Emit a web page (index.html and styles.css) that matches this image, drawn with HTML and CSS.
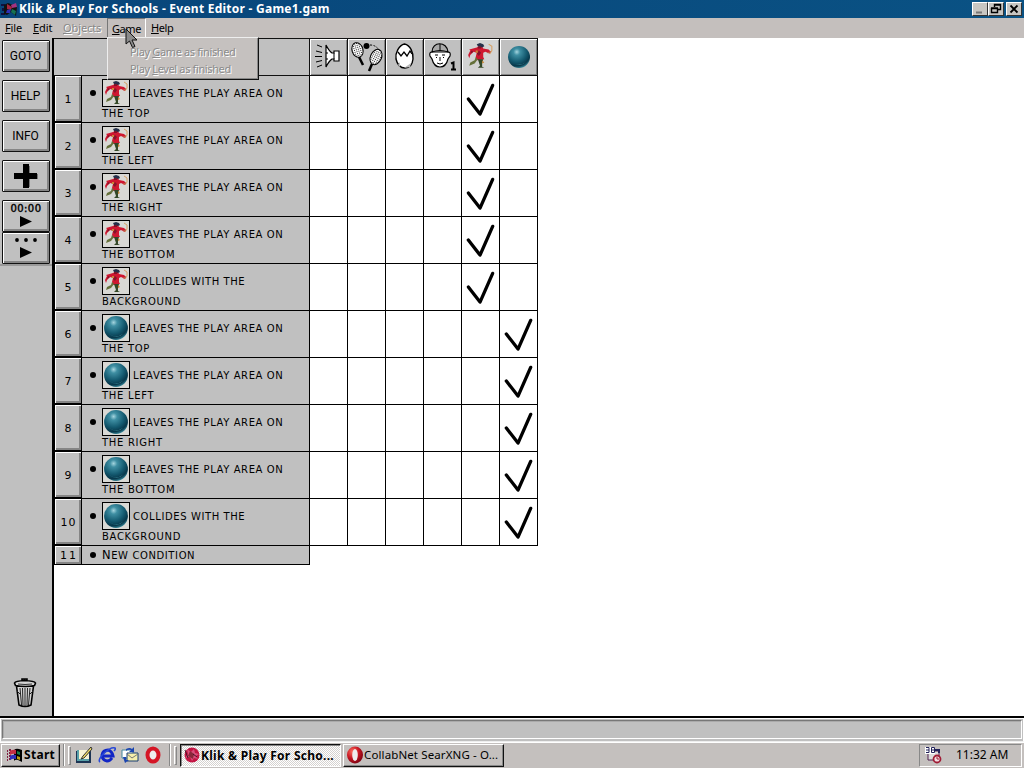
FILE: index.html
```html
<!DOCTYPE html>
<html lang="en">
<head>
<meta charset="utf-8">
<title>Klik &amp; Play For Schools - Event Editor - Game1.gam</title>
<link rel="stylesheet" href="styles.css">
</head>
<body>
<svg class="defs" aria-hidden="true">
<defs>
<radialGradient id="ballg" cx=".4" cy=".27" r=".75"><stop offset="0" stop-color="#a5d5df"/><stop offset=".2" stop-color="#3f8fa3"/><stop offset=".6" stop-color="#145a70"/><stop offset=".85" stop-color="#08384b"/><stop offset="1" stop-color="#35889a"/></radialGradient>
<radialGradient id="redg" cx=".35" cy=".3" r=".8"><stop offset="0" stop-color="#ff7060"/><stop offset=".5" stop-color="#c51522"/><stop offset="1" stop-color="#700010"/></radialGradient>
<pattern id="mesh" width="2" height="2" patternUnits="userSpaceOnUse"><rect width="2" height="2" fill="#fff"/><path d="M0 0h1v1H0z" fill="#222"/></pattern>
<symbol id="ball" viewBox="0 0 24 24"><circle cx="12" cy="12" r="11" fill="url(#ballg)"/><path d="M5 17q7 5 14 0q-6 6-14 0" fill="#55b0bc" opacity=".6"/></symbol>
<symbol id="man" viewBox="0 0 26 26"><path d="M3 7l7-2 2-1h3l1 2 5 1 2 2-1 2-4-2-2 1v4l1 2-7 1-1-3 1-4-3-1-3 3-1 3-1-3 2-4z" fill="#cf1730"/><path d="M10 2l3-1 3 1 1 2-2 1-4-1z" fill="#26304a"/><path d="M11 4h3v2h-3z" fill="#7d1528"/><path d="M12 8l2 2-2 3-2-2zM5 8l2 1-3 2z" fill="#81162a"/><path d="M9 14l-1 3-4 2-1 3 5-2 3-4z" fill="#65713a"/><path d="M11 16h5l-1 4v3l2 1h-6l2-2-1-3z" fill="#344827"/><path d="M15 17l2 2-2 1zM9 8h2v2H9z" fill="#c98735"/><path d="M22 11l2-3V4l-3-2" fill="none" stroke="#d6a064"/><path d="M20 10l3-1" stroke="#be5c41"/></symbol>
<symbol id="check" viewBox="0 0 38 46"><path d="M6.500 23L18.500 38.500L31.500 9" fill="none" stroke="#000" stroke-width="3.400" stroke-linecap="round" stroke-linejoin="round"/></symbol>
<symbol id="win" viewBox="0 0 18 16"><path d="M1 4h1M3 3h2M1 7h1M3 6h2M1 10h1M3 9h2M1 13h1M3 12h2" stroke="#802040" stroke-width="2"/><path d="M8 3q2-2 5-1l3 1v12l-4-2q-3-1-4 1z" fill="#000"/><path d="M4 4q3-2 6-1v4q-3-1-6 1z" fill="#c52e45"/><path d="M11 4l3 1v3l-3-1z" fill="#147947"/><path d="M4 9q3-2 6-1v4q-3-1-6 1z" fill="#3030bd"/><path d="M11 9l3 1v3l-3-1z" fill="#b99a17"/></symbol>
<symbol id="opera" viewBox="0 0 18 18"><ellipse cx="9" cy="9" rx="8" ry="8.500" fill="url(#redg)"/><ellipse cx="9" cy="9" rx="2.800" ry="6" fill="#eee"/></symbol>
</defs>
</svg>
<div class="screen">
  <header class="titlebar">
    <svg class="appicon" viewBox="0 0 18 16"><path d="M0 3h4v2H0zM1 7h4v3H1zM0 12h4v2H0z" fill="#101040"/><path d="M3 4l4-2 5 2 4 2-1 9-5-4-4 3-3-1z" fill="#111"/><path d="M6 3l5 3-1 3-4-1z" fill="#a42740"/><path d="M10 4l5-2 1 4-5 1z" fill="#a43280"/><path d="M6 9l4-1-1 4H5z" fill="#3030b5"/><path d="M11 8l4 2-1 4-4-3z" fill="#167352"/></svg>
    <h1 class="title">Klik &amp; Play For Schools - Event Editor - Game1.gam</h1>
    <div class="winbtns">
      <span class="wb"><svg viewBox="0 0 14 12"><path d="M3 9.500h6" stroke="#777" stroke-width="2"/></svg></span><span class="wb"><svg viewBox="0 0 14 12"><path d="M5.500 4V1.500h6v5H9M5 2h7M2.500 5.500h6v4h-6zM2 5h7" fill="none" stroke="#000" stroke-width="1.400"/></svg></span><span class="wb gap"><svg viewBox="0 0 14 12"><path d="M3.500 2.500l7 7M10.500 2.500l-7 7" stroke="#000" stroke-width="1.800"/></svg></span>
    </div>
  </header>
  <nav class="menubar">
    <span class="mi file"><u>F</u>ile</span><span class="mi edit"><u>E</u>dit</span><span class="mi objects off"><u>O</u>bjects</span><span class="mi game"><u>G</u>ame</span><span class="mi help"><u>H</u>elp</span>
  </nav>
  <main class="work">
    <aside class="tools">
      <button class="tool"><span>GOTO</span></button>
      <button class="tool"><span>HELP</span></button>
      <button class="tool"><span>INFO</span></button>
      <button class="tool"><svg width="26" height="26" viewBox="0 0 26 26"><path d="M11 3h6v8h8v5h-8v8h-6v-8H3v-5h8z" fill="#777"/><path d="M10 1h6v9h8v6h-8v9h-6v-9H1v-6h9z"/></svg></button>
      <button class="tool time"><b>00:00</b><svg width="12" height="12" viewBox="0 0 12 12"><path d="M0 0v11l12-5.500z"/></svg></button>
      <button class="tool dots"><svg width="26" height="22" viewBox="0 0 26 22"><circle cx="4" cy="3" r="1.900"/><circle cx="13" cy="3" r="1.900"/><circle cx="22" cy="3" r="1.900"/><path d="M7 10v11l12-5.500z"/></svg></button>
      <div class="fold"></div>
      <svg class="trash" width="24" height="30" viewBox="0 0 24 30"><path d="M9 3V1h5v2M1.500 5q1-2 10-2.500 10 .5 11 2.500l-1 2.500q-9 2-19 0zM3.500 8l2.500 19q6 3 12 0l2.500-19" fill="#d4d4d4" stroke="#000" stroke-width="1.600"/><path d="M7 10l1.500 17M12 10v18M17 10l-1.500 17M4 13l3 3M20 13l-3 3M9.500 10l.5 17M14.500 10l-.5 17" fill="none" stroke="#222" stroke-width="1"/><path d="M5 6q7 1 14 0" fill="none" stroke="#333"/></svg>
    </aside>
    <section class="grid">
      <div class="row head">
        <div class="corner"></div>
        <div class="hc"><svg viewBox="0 0 36 35"><path d="M16 6q3 6 6 8h2v-2h5v10h-5v-2h-2q-3 2-6 8z" fill="#fff" stroke="#000" stroke-width="1.200"/><path d="M24 14v6M16 14h2M16 20h2M7 6l5 2M6 12l6 1.500M5 17.500h7M6 23l6-1.500M7 28l5-2" fill="none" stroke="#000"/></svg></div>
        <div class="hc"><svg viewBox="0 0 36 35"><ellipse cx="9.500" cy="11" rx="5.500" ry="7.500" fill="url(#mesh)" stroke="#000" transform="rotate(-17 9.500 11)"/><path d="M11 18l4 8" stroke="#000" stroke-width="2.500"/><ellipse cx="28" cy="18" rx="5.500" ry="8" fill="url(#mesh)" stroke="#000" transform="rotate(25 28 18)"/><path d="M24 25l-3 7" stroke="#000" stroke-width="2.500"/><circle cx="18.500" cy="7" r="3"/><path d="M22 6q6 0 9 5" fill="none" stroke="#000" stroke-dasharray="2 1.500"/></svg></div>
        <div class="hc"><svg viewBox="0 0 36 35"><path d="M18.500 5c6 1 9 9 8.500 15q-1 9-8 9t-9-9c-1-6 3-14 8.500-15z" fill="#fff" stroke="#000" stroke-width="1.400"/><path d="M12 13l3 4 3-4 3 4 3-5 2 3" fill="none" stroke="#000" stroke-width="1.300"/><path d="M12 26l2-3v5zM18 29l7-5-1 4z" fill="#bbb"/></svg></div>
        <div class="hc"><svg viewBox="0 0 36 35"><path d="M8 13q-3 0-2 4l2 3q2 8 8 8t8-8l2-3q1-4-2-4z" fill="#fff" stroke="#000" stroke-width="1.200"/><path d="M8 13c0-11 15-11 16 0q-8-3-16 0z" fill="#aaa" stroke="#000" stroke-width="1.200"/><path d="M16 5v6M11 16h3M18 16h3M12 18.500h1M19 18.500h1M16 18v4M13 24q3 2 6 0" fill="none" stroke="#000"/><path d="M27 24.500l2.500-1v7.500M27 30.500h5" fill="none" stroke="#000" stroke-width="2"/></svg></div>
        <div class="hc sel"><svg viewBox="0 0 36 35"><use href="#man" x="3" y="3" width="30" height="28"/></svg></div>
        <div class="hc"><svg viewBox="0 0 36 35"><use href="#ball" x="7" y="6" width="24" height="24"/></svg></div>
      </div>
      <div id="events"></div>
      <div class="row last"><div class="num"><span>11</span></div><div class="cond"><i class="dot"></i><span class="cap">N</span><span class="new">EW CONDITION</span></div></div>
    </section>
    <div class="dropdown"><p>Play <u>G</u>ame as finished</p><p>Play <u>L</u>evel as finished</p></div>
  </main>
  <div class="status"><div class="sunk"></div></div>
  <footer class="taskbar">
    <button class="start"><svg width="18" height="16"><use href="#win"/></svg><span>Start</span></button>
    <i class="sep s1"></i><i class="handle"></i>
    <div class="quick">
      <svg width="18" height="18" viewBox="0 0 18 18"><path d="M1 5h15v12H1z" fill="#1c3454"/><path d="M2 4h12v11H2z" fill="#58a2aa"/><path d="M4 4h10v9H4z" fill="#f7f3d5"/><path d="M16 1L8 10l-2 3 3-1 8-9z" fill="#f0dc63" stroke="#333"/></svg>
      <svg width="18" height="18" viewBox="0 0 18 18"><path d="M14 12q-2 3-5 3-5-1-5-6 1-5 6-5 4 1 5 6H5" fill="none" stroke="#1226c5" stroke-width="3"/><path d="M2 16C-2 13 12 0 17 2q1 1-1 3" fill="none" stroke="#2848d8" stroke-width="1.600"/></svg>
      <svg width="18" height="18" viewBox="0 0 18 18"><path d="M1 4h11v8H1z" fill="#fff" stroke="#4488a0"/><path d="M6 7h11v8H6z" fill="#f6efab" stroke="#173c72"/><path d="M6 8l5 4 6-4" fill="none" stroke="#777"/><path d="M5 3q4-2 6 0l2-2v5H8l2-2Q7 3 5 5zM2 11h3v3h3l-4 3z" fill="#1b45b0"/></svg>
      <svg width="18" height="18" viewBox="0 0 18 18"><ellipse cx="9" cy="9" rx="5.500" ry="6.500" fill="#eee" stroke="#d51525" stroke-width="4"/></svg>
    </div>
    <i class="sep s2"></i><i class="handle"></i>
    <button class="task active"><svg width="18" height="18" viewBox="0 0 18 18"><circle cx="9" cy="9" r="7.500" fill="#c31543"/><path d="M4 3l4 3 3-3 1 4 4 1-3 2 2 3-4-1-2 3-2-4-5 1 3-4z" fill="#d8507c"/><path d="M7 5l4 3-1 5-5-3z" fill="#89283b"/><path d="M2 4l3 8M10 8l4 3" stroke="#471027"/></svg><span>Klik &amp; Play For Scho...</span></button>
    <button class="task second"><svg width="18" height="18"><use href="#opera"/></svg><span>CollabNet SearXNG - O...</span></button>
    <div class="tray"><svg width="18" height="18" viewBox="0 0 18 18"><path d="M4 5h11v9H4z" fill="#ddd" stroke="#502050"/><path d="M1 1h10v7H1z" fill="#fff"/><path d="M2 1.500h3v5H2M2 4h3M7.500 1.500h3v5h-3zM7 4h3" fill="none" stroke="#23235b"/><path d="M11 4h4v3" fill="none" stroke="#23235b" stroke-width="2"/><circle cx="13" cy="13" r="3.500" fill="#f0dce0" stroke="#a01b35" stroke-width="1.800"/><path d="M13 11v2h2" fill="none" stroke="#a01b35"/></svg><span>11:32 AM</span></div>
  </footer>
  <svg class="cursor" width="13" height="21" viewBox="0 0 13 21"><path d="M1 1v15l3.500-3 3 6.500 2.500-1-3-6.500H12z" fill="#8b8b8b" stroke="#111"/></svg>
</div>
<script src="events.js"></script>
</body>
</html>
```

FILE: styles.css
```css
* { box-sizing: border-box; }
body { margin: 0; overflow: hidden; font-family: "DejaVu Sans", sans-serif; color: #000; }
.defs { position: absolute; width: 0; height: 0; }
.screen { position: relative; width: 1024px; height: 768px; display: flex; flex-direction: column; background: #c0c0c0; }
button { font: inherit; color: inherit; padding: 0; border-radius: 0; }
u { text-decoration-thickness: 1px; text-underline-offset: 1px; }
.titlebar { height: 18px; flex: none; display: flex; align-items: center; background: linear-gradient(90deg, #08457a, #0a5284); padding: 0 2px 0 1px; }
.appicon { width: 18px; height: 16px; }
.title { margin: 0; flex: 1; color: #fff; white-space: nowrap; font: bold 12px/18px "Noto Sans", sans-serif; letter-spacing: .25px; }
.winbtns { display: flex; }
.wb { width: 16px; height: 14px; background: #c8c6c2; border: 1px solid; border-color: #fff #333 #333 #fff; display: flex; }
.wb svg { width: 14px; height: 12px; }
.gap { margin-left: 2px; }
.menubar { height: 20px; flex: none; display: flex; background: #c4bfbd; font: 11px/20px "Noto Sans", sans-serif; padding-left: 5px; white-space: nowrap; letter-spacing: -.1px; }
.mi { height: 20px; }
.file { width: 28px; }
.edit { width: 30px; }
.objects { width: 44px; }
.off { color: #888; text-shadow: 1px 1px #fff; }
.game { width: 39px; text-align: center; border: 1px solid; border-color: #777 #fff #fff #777; line-height: 20px; letter-spacing: -.4px; }
.help { padding-left: 5px; letter-spacing: -.4px; }
.work { position: relative; height: 680px; flex: none; display: flex; background: #fff; border-bottom: 2px solid #000; }
.tools { width: 54px; flex: none; display: flex; flex-direction: column; background: #c0c0c0; border-right: 2px solid #000; padding: 2px 0 0 2px; }
.tool { width: 48px; height: 32px; flex: none; margin-bottom: 8px; background: #c0c0c0; border: 1px solid #111; border-radius: 1px; box-shadow: inset 1px 1px #fff, inset -2px -2px #858585; font-size: 12px; display: flex; align-items: center; justify-content: center; }
.tool span { font-family: "Roboto", sans-serif; letter-spacing: 0; padding-right: 1px; }
.time, .dots { flex-direction: column; }
.time { margin-bottom: 0; }
.time b { font: 10px/10px "DejaVu Sans", sans-serif; -webkit-text-stroke: .4px #000; margin-bottom: 2px; letter-spacing: .4px; }
.dots { margin-bottom: 0; }
.fold { border-top: 2px solid #999; margin-left: -2px; flex: 1; }
.trash { margin: 0 0 8px 11px; }
.grid { width: 484px; flex: none; }
.row { display: flex; height: 47px; }
.head { height: 38px; border-top: 1px solid #111; }
.corner { width: 256px; background: #c0c0c0; border: solid #111; border-width: 0 1px 1px 0; }
.hc { width: 38px; height: 37px; border: solid #111; border-width: 0 1px 1px 0; background: #c0c0c0; box-shadow: inset 1px 1px #fff, inset -1px -1px #858585; }
.hc svg { display: block; width: 36px; height: 35px; }
.sel { background: #d3d3d3; }
.num { width: 28px; border: solid #000; border-width: 0 1px 2px 1px; background: #c0c0c0; box-shadow: inset 1px 1px #fff, inset -2px -2px #858585; display: flex; align-items: center; justify-content: center; font-size: 11px; }
.num span { padding-top: 2px; letter-spacing: 1px; padding-left: 1px; }
.cond { width: 228px; padding-left: 20px; background: #c0c0c0; border: solid #000; border-width: 0 1px 1px 0; position: relative; font-size: 10px; white-space: nowrap; letter-spacing: .6px; }
.dot { position: absolute; left: 8px; top: 14px; width: 6px; height: 6px; border-radius: 50%; background: #000; }
.line { display: flex; align-items: center; height: 31px; gap: 3px; }
.pic { width: 28px; height: 28px; margin-top: 3px; border: 1px solid #000; background: #d8d8d4; display: flex; }
.pic svg { width: 26px; height: 26px; }
.line .txt { padding-top: 4px; }
.line2 { display: block; line-height: 14px; letter-spacing: .7px; }
.cell { width: 38px; border: solid #000; border-width: 0 1px 1px 0; background: #fff; }
.cell svg { display: block; width: 37px; height: 46px; }
.last { height: 19px; }
.last .num { border-bottom-width: 1px; }
.last .num span { padding-top: 0; letter-spacing: 2px; padding-left: 2px; }
.last .cond { line-height: 18px; }
.last .dot { top: 6px; }
.cap { font-size: 11.5px; }
.dropdown { position: absolute; left: 107px; top: -1px; width: 152px; height: 43px; background: #c5c1bf; border: 1px solid; border-color: #eee #111 #111 #eee; box-shadow: inset -1px -1px #888; padding: 5px 0 0 22px; font: 11px/17px "Noto Sans", sans-serif; letter-spacing: -.37px; color: #8c8c8c; text-shadow: 1px 1px #fff; white-space: nowrap; }
.dropdown p { margin: 0; }
.cursor { position: absolute; left: 125px; top: 28px; }
.status { height: 24px; flex: none; padding: 1px; background: #c0c0c0; border: 1px solid #fff; border-bottom-color: #eee; }
.sunk { height: 19px; border: 1px solid; border-color: #777 #fff #fff #777; box-shadow: inset 1px 1px #aaa; }
.taskbar { height: 26px; flex: none; display: flex; align-items: center; padding: 0 2px 1px 1px; border-top: 1px solid #fff; background: #c4c0be; font: 11px/22px "Noto Sans", sans-serif; }
.start { width: 59px; height: 23px; display: flex; align-items: center; gap: 0; padding-left: 4px; background: #c4c0be; border: 1px solid; border-color: #fff #111 #111 #fff; box-shadow: inset -1px -1px #888; font-weight: bold; font-size: 12px; letter-spacing: .3px; }
.sep { width: 2px; height: 22px; border-left: 1px solid #888; border-right: 1px solid #fff; }
.s1 { margin-left: 3px; }
.handle { width: 3px; height: 19px; margin-left: 3px; border: 1px solid; border-color: #fff #888 #888 #fff; }
.quick { display: flex; gap: 5px; margin-left: 4px; }
.s2 { margin-left: 7px; }
.task { height: 23px; display: flex; align-items: center; border: 1px solid; white-space: nowrap; text-align: left; background: #c4c0be; padding-left: 2px; }
.active { width: 161px; margin-left: 3px; background: repeating-conic-gradient(#fff 0 25%, #d5d2d0 0 50%) 0 0/2px 2px; border-color: #111 #fff #fff #111; box-shadow: inset 1px 1px #888; font-weight: bold; font-size: 12px; letter-spacing: .27px; }
.active span { padding-top: 2px; }
.second { width: 161px; margin-left: 2px; border-color: #fff #111 #111 #fff; box-shadow: inset -1px -1px #888; font-size: 11.5px; letter-spacing: .12px; }
.tray { width: 103px; height: 23px; margin-left: auto; display: flex; align-items: center; padding-left: 4px; border: 1px solid; border-color: #888 #fff #fff #888; gap: 14px; font-size: 12px; white-space: nowrap; }
```

FILE: events.js
```js
const leaves = "LEAVES THE PLAY AREA ON";
const collides = "COLLIDES WITH THE";
const conditions = [
  [leaves, "THE TOP"],
  [leaves, "THE LEFT"],
  [leaves, "THE RIGHT"],
  [leaves, "THE BOTTOM"],
  [collides, "BACKGROUND"],
];
const actors = [{ icon: "man", column: 4 }, { icon: "ball", column: 5 }];

let html = "";
actors.forEach((actor, a) => {
  conditions.forEach(([first, second], i) => {
    let cells = "";
    for (let c = 0; c < 6; c++) {
      cells += `<div class="cell">${c === actor.column ? '<svg><use href="#check"/></svg>' : ""}</div>`;
    }
    html += `<div class="row"><div class="num"><span>${a * 5 + i + 1}</span></div>
      <div class="cond"><i class="dot"></i>
        <div class="line"><span class="pic"><svg><use href="#${actor.icon}"/></svg></span><span class="txt">${first}</span></div>
        <span class="line2">${second}</span>
      </div>${cells}</div>`;
  });
});
document.getElementById("events").innerHTML = html;
```
